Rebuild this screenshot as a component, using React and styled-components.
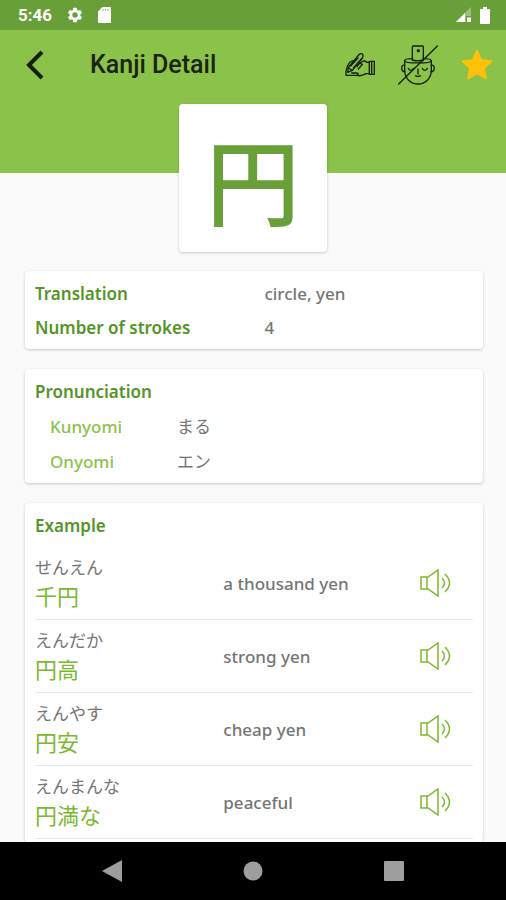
import React from "react"
import styled, { createGlobalStyle } from "styled-components"

const GlobalStyle = createGlobalStyle`
  * {
    box-sizing: border-box;
  }
  body {
    margin: 0;
    background: #fafafa;
    color: #757575;
    font-family: "Noto Sans", "Noto Sans CJK JP", sans-serif;
    font-size: 17px;
    font-weight: 500;
  }
  :lang(ja) {
    font-weight: 400;
  }
`

const Page = styled.div`
  display: flex;
  flex-direction: column;
  height: 100vh;
`

const StatusBar = styled.div`
  display: flex;
  align-items: center;
  justify-content: space-between;
  flex: none;
  height: 30px;
  padding: 0 16px 0 18px;
  background: #689f38;
  color: white;
  font-family: Roboto, sans-serif;
  font-size: 17px;
  font-weight: 700;
`

const StatusGroup = styled.div`
  display: flex;
  align-items: center;
  gap: ${props => props.$gap};
`

const Screen = styled.main`
  flex: 1;
  min-height: 0;
  overflow-y: auto;
  scrollbar-width: none;
`

const Hero = styled.header`
  height: 143px;
  background: #8bc34a;
`

const Toolbar = styled.div`
  display: flex;
  align-items: center;
  height: 69px;
  padding: 0 13px 0 20px;
`

const Title = styled.h1`
  flex: 1;
  margin: 0 0 0 40px;
  color: #1b2410;
  font-family: Roboto, sans-serif;
  font-size: 25px;
  font-weight: 500;
`

const Actions = styled.div`
  display: flex;
  align-items: center;
  gap: 23px;
`

const IconButton = styled.button`
  display: flex;
  align-items: center;
  justify-content: center;
  padding: 0;
  border: 0;
  background: none;
  color: ${props => props.$color || "#14200a"};
  cursor: pointer;
`

const Card = styled.section`
  border-radius: 4px;
  background: white;
  box-shadow: 0 1px 3px rgba(0, 0, 0, 0.2);
`

const KanjiCard = styled(Card)`
  display: flex;
  align-items: center;
  justify-content: center;
  width: 148px;
  height: 148px;
  margin: -69px auto 0;
  color: #689f38;
  font-family: "Noto Sans CJK JP", sans-serif;
  font-size: 94px;
  font-weight: 500;
  line-height: 1;
`

const Sections = styled.div`
  display: flex;
  flex-direction: column;
  gap: 20px;
  padding: 19px 23px 20px 25px;
`

const InfoCard = styled(Card)`
  padding: 6px 10px 4px;
`

const Heading = styled.h2`
  margin: 0;
  color: #559426;
  font-size: 17px;
  font-weight: 600;
  line-height: 34px;
`

const Details = styled.dl`
  display: grid;
  grid-template-columns: 11fr 10fr;
  margin: 0;
  line-height: 34px;
`

const Term = styled.dt`
  color: #559426;
  font-weight: 600;
`

const Value = styled.dd`
  margin: 0;
`

const Readings = styled.dl`
  display: grid;
  grid-template-columns: 3fr 7fr;
  margin: 0;
  padding-left: 15px;
  line-height: 35px;
`

const ReadingType = styled.dt`
  color: #8bc34a;
`

const ExampleTable = styled.table`
  width: 100%;
  margin-top: 4px;
  border-spacing: 0;
  table-layout: fixed;
`

const Cell = styled.td`
  width: ${props => props.$width};
  padding: 7px 0;
  border-bottom: 1px solid #e8e8e8;
`

const Kana = styled.div`
  line-height: 28px;
`

const Word = styled.div`
  padding-bottom: 2px;
  color: #7cb82f;
  font-size: 22px;
  line-height: 28px;
`

const NavBar = styled.nav`
  display: flex;
  align-items: center;
  justify-content: space-around;
  flex: none;
  height: 58px;
  padding: 0 42px;
  background: black;
`

const GearIcon = () => (
  <svg width="18" height="18" viewBox="0 0 24 24" fill="currentColor">
    <path d="M19.14 12.94a7 7 0 0 0 .06-.94 7 7 0 0 0-.06-.94l2.03-1.58a.5.5 0 0 0 .12-.61l-1.92-3.32a.5.5 0 0 0-.59-.22l-2.39.96a7 7 0 0 0-1.62-.94l-.36-2.54a.5.5 0 0 0-.48-.41h-3.84a.5.5 0 0 0-.47.41l-.36 2.54a7 7 0 0 0-1.62.94l-2.39-.96a.5.5 0 0 0-.59.22L2.74 8.87a.5.5 0 0 0 .12.61l2.03 1.58a7 7 0 0 0 0 1.88l-2.03 1.58a.5.5 0 0 0-.12.61l1.92 3.32c.12.22.37.29.59.22l2.39-.96c.5.38 1.03.7 1.62.94l.36 2.54c.05.24.24.41.48.41h3.84c.24 0 .44-.17.47-.41l.36-2.54a7 7 0 0 0 1.62-.94l2.39.96c.22.08.47 0 .59-.22l1.92-3.32a.5.5 0 0 0-.12-.61zM12 15.6a3.6 3.6 0 1 1 0-7.2 3.6 3.6 0 0 1 0 7.2z" />
  </svg>
)

const SdCardIcon = () => (
  <svg width="13" height="16" viewBox="0 0 13 16" fill="currentColor">
    <path d="M4.500 0H12a1 1 0 0 1 1 1v14a1 1 0 0 1-1 1H1a1 1 0 0 1-1-1V4.500z" />
    <path d="M5 2v2M7.500 2v2M10 2v2" stroke="#8fb96c" strokeWidth="1" />
  </svg>
)

const SignalIcon = () => (
  <svg width="15" height="16" viewBox="0 0 15 16" fill="currentColor">
    <path d="M15 0v9H10v6H0z" opacity=".35" />
    <path d="M9 6v9H0z" />
    <path d="M11 10.500h4V15h-4z" />
  </svg>
)

const BatteryIcon = () => (
  <svg width="10" height="17" viewBox="0 0 10 17" fill="currentColor">
    <path d="M3 0h4v2h2a1 1 0 0 1 1 1v13a1 1 0 0 1-1 1H1a1 1 0 0 1-1-1V3a1 1 0 0 1 1-1h2z" />
  </svg>
)

const BackIcon = () => (
  <svg width="30" height="30" viewBox="0 0 30 30" fill="none">
    <path d="M22 2L9 15l13 13" stroke="currentColor" strokeWidth="4" />
  </svg>
)

const WritingIcon = () => (
  <svg
    width="30"
    height="26"
    viewBox="0 0 90 78"
    fill="none"
    stroke="currentColor"
    strokeWidth="4"
    strokeLinejoin="round"
    strokeLinecap="round"
  >
    <path d="M8 61l2-15 31-37c3-4 9-6 12-2s2 7-1 11L22 55z" />
    <path d="M17 42l22-24M25 48l25-28M10 47l11 8" />
    <path d="M26 26c-9 0-15 8-19 17L3 58v12h33c4 0 5-6 0-7H20" />
    <path d="M36 70c9 3 20-1 27-5h10M44 33l14-7 8 5h7M36 44l8-11 8 4-12 14" />
    <path d="M73 28h15v39H73zM80 29v37" />
  </svg>
)

const HeadIcon = () => (
  <svg
    width="40"
    height="40"
    viewBox="0 0 120 120"
    fill="none"
    stroke="currentColor"
    strokeWidth="4"
    strokeLinejoin="round"
    strokeLinecap="round"
  >
    <path d="M43 45V6q0-3 3-3h27q3 0 3 3v39" />
    <path d="M43 45q16 5 33 0" />
    <circle cx="61" cy="17" r="3" />
    <path d="M43 41c-14 0-23 2-23 6 0 9 80 9 80 0 0-4-9-6-24-6" />
    <path d="M20 48v28c0 24 18 41 40 41s40-17 40-41V48" />
    <path d="M20 61c-12-5-12 21 1 19M100 61c12-5 12 21-1 19" />
    <path d="M31 70c3 8 12 8 15 0M73 70c3 8 12 8 15 0M60 72v15M53 92c3 3 11 3 14 0" />
    <path d="M2 117L118 3" />
  </svg>
)

const StarIcon = () => (
  <svg width="32" height="32" viewBox="0 0 32 32" fill="currentColor">
    <path
      d="M16 2l4.200 9.300 10.200 1-7.600 6.900 2.100 10.100-8.900-5.200-8.900 5.200 2.100-10.100-7.600-6.900 10.200-1z"
      stroke="currentColor"
      strokeWidth="2"
      strokeLinejoin="round"
    />
  </svg>
)

const SpeakerIcon = () => (
  <svg
    width="32"
    height="28"
    viewBox="0 0 32 28"
    fill="none"
    stroke="currentColor"
    strokeWidth="1.5"
  >
    <path d="M1 8h7l10-7v26L8 20H1zM7 8v12" />
    <path d="M22 9q5 5 0 10M25 5q9 9 0 18" />
  </svg>
)

const examples = [
  { kana: "せんえん", word: "千円", meaning: "a thousand yen" },
  { kana: "えんだか", word: "円高", meaning: "strong yen" },
  { kana: "えんやす", word: "円安", meaning: "cheap yen" },
  { kana: "えんまんな", word: "円満な", meaning: "peaceful" },
]

const App = () => (
  <Page>
    <GlobalStyle />
    <StatusBar>
      <StatusGroup $gap="14px">
        5:46
        <GearIcon />
        <SdCardIcon />
      </StatusGroup>
      <StatusGroup $gap="9px">
        <SignalIcon />
        <BatteryIcon />
      </StatusGroup>
    </StatusBar>
    <Screen>
      <Hero>
        <Toolbar>
          <IconButton aria-label="Back">
            <BackIcon />
          </IconButton>
          <Title>Kanji Detail</Title>
          <Actions>
            <IconButton aria-label="Practice writing">
              <WritingIcon />
            </IconButton>
            <IconButton aria-label="Mark as not memorized">
              <HeadIcon />
            </IconButton>
            <IconButton aria-label="Favorite" $color="#ffc107">
              <StarIcon />
            </IconButton>
          </Actions>
        </Toolbar>
      </Hero>
      <KanjiCard lang="ja">円</KanjiCard>
      <Sections>
        <InfoCard>
          <Details>
            <Term>Translation</Term>
            <Value>circle, yen</Value>
            <Term>Number of strokes</Term>
            <Value>4</Value>
          </Details>
        </InfoCard>
        <InfoCard>
          <Heading>Pronunciation</Heading>
          <Readings>
            <ReadingType>Kunyomi</ReadingType>
            <Value lang="ja">まる</Value>
            <ReadingType>Onyomi</ReadingType>
            <Value lang="ja">エン</Value>
          </Readings>
        </InfoCard>
        <InfoCard>
          <Heading>Example</Heading>
          <ExampleTable>
            <tbody>
              {examples.map(({ kana, word, meaning }) => (
                <tr key={word}>
                  <Cell $width="43%" lang="ja">
                    <Kana>{kana}</Kana>
                    <Word>{word}</Word>
                  </Cell>
                  <Cell $width="45%">{meaning}</Cell>
                  <Cell $width="12%">
                    <IconButton aria-label={`Play ${word}`} $color="#7cb82f">
                      <SpeakerIcon />
                    </IconButton>
                  </Cell>
                </tr>
              ))}
            </tbody>
          </ExampleTable>
        </InfoCard>
      </Sections>
    </Screen>
    <NavBar>
      <IconButton aria-label="System back" $color="#9e9e9e">
        <svg width="20" height="22" viewBox="0 0 20 22" fill="currentColor">
          <path d="M20 0v22L0 11z" />
        </svg>
      </IconButton>
      <IconButton aria-label="Home" $color="#9e9e9e">
        <svg width="20" height="20" viewBox="0 0 20 20" fill="currentColor">
          <circle cx="10" cy="10" r="9.500" />
        </svg>
      </IconButton>
      <IconButton aria-label="Recent apps" $color="#9e9e9e">
        <svg width="20" height="20" viewBox="0 0 20 20" fill="currentColor">
          <rect width="20" height="20" rx="1" />
        </svg>
      </IconButton>
    </NavBar>
  </Page>
)

export default App
